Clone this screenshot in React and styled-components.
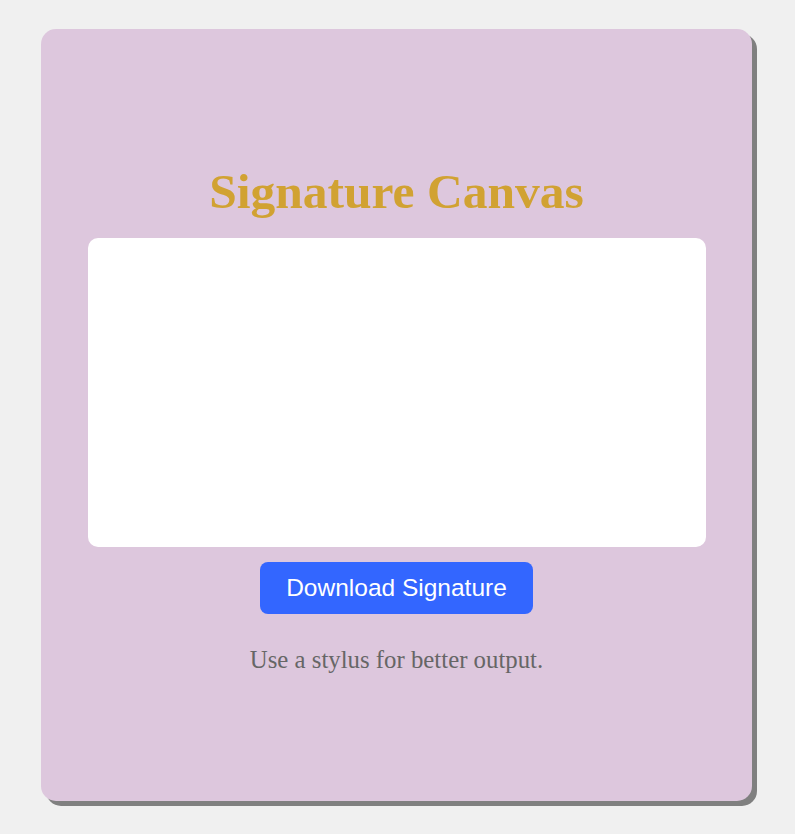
import React from "react";
import styled, { createGlobalStyle } from "styled-components";

const Global = createGlobalStyle`
  html, body { margin: 0; padding: 0; background: #f0f0f0; }
  body { font-family: "Liberation Serif", "Times New Roman", serif; }
`;

const Page = styled.div`
  min-height: 834px;
  display: flex;
  align-items: flex-start;
  justify-content: center;
  padding-top: 29px;
  box-sizing: border-box;
`;

const Card = styled.div`
  box-sizing: border-box;
  width: 711px;
  height: 772px;
  margin-left: -2px;
  background: #ddc7dd;
  border-radius: 15px;
  box-shadow: 5px 5px 0 #808080;
  display: flex;
  flex-direction: column;
  align-items: center;
  justify-content: flex-start;
  padding: 134px 46px 0;
`;

const Title = styled.h1`
  margin: 0 0 18px;
  font-family: "Liberation Serif", "Times New Roman", serif;
  font-weight: bold;
  font-size: 49.5px;
  line-height: 57px;
  color: #d1a232;
`;

const Canvas = styled.canvas`
  display: block;
  width: 618px;
  height: 309px;
  background: #ffffff;
  border-radius: 10px;
`;

const Button = styled.button`
  margin-top: 15px;
  width: 273px;
  height: 52px;
  border: none;
  border-radius: 8px;
  background: #3366ff;
  color: #ffffff;
  font-family: "Liberation Sans", Arial, sans-serif;
  font-size: 24.5px;
  cursor: pointer;
`;

const Hint = styled.p`
  margin: 32px 0 0;
  font-size: 24.8px;
  color: #666666;
`;

export default function App() {
  return (
    <>
      <Global />
      <Page>
        <Card>
          <Title>Signature Canvas</Title>
          <Canvas />
          <Button>Download Signature</Button>
          <Hint>Use a stylus for better output.</Hint>
        </Card>
      </Page>
    </>
  );
}
